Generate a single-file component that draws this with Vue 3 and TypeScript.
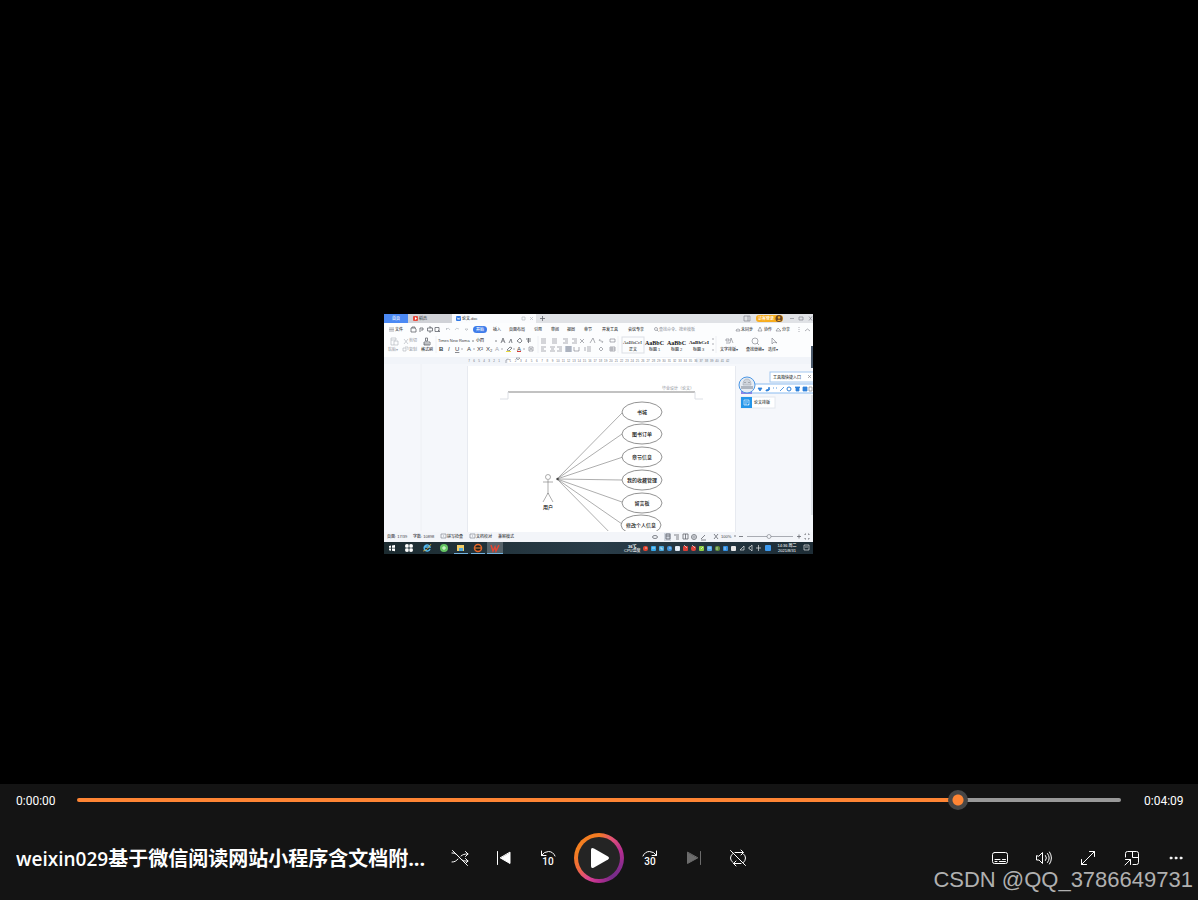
<script setup lang="ts">
import { computed, ref } from 'vue'

interface Label {
  x: number
  y: number
  text: string
  kind?: string
}

const position = ref(851)
const fill = computed(() => ({ '--fill': `${position.value / 10}%` }))

const menuLabels: Label[] = [
  { x: 395, y: 331, text: '文件' },
  { x: 493, y: 331, text: '插入' },
  { x: 509, y: 331, text: '页面布局' },
  { x: 534, y: 331, text: '引用' },
  { x: 551, y: 331, text: '审阅' },
  { x: 567, y: 331, text: '视图' },
  { x: 584, y: 331, text: '章节' },
  { x: 602, y: 331, text: '开发工具' },
  { x: 628, y: 331, text: '会议专享' },
  { x: 659, y: 331, text: '查找命令、搜索模板', kind: 'faint' },
  { x: 741, y: 331, text: '未同步' },
  { x: 764, y: 331, text: '协作' },
  { x: 782, y: 331, text: '分享' },
]

const ribbonLabels: Label[] = [
  { x: 388, y: 351, text: '粘贴▾', kind: 'faint' },
  { x: 409, y: 342, text: '剪切', kind: 'faint' },
  { x: 409, y: 351, text: '复制', kind: 'faint' },
  { x: 421, y: 351, text: '格式刷' },
  { x: 476, y: 342, text: '小四' },
  { x: 629, y: 351, text: '正文' },
  { x: 649, y: 351, text: '标题 1' },
  { x: 671, y: 351, text: '标题 2' },
  { x: 693, y: 351, text: '标题 3' },
  { x: 720, y: 351, text: '文字排版▾' },
  { x: 746, y: 351, text: '查找替换▾' },
  { x: 768, y: 351, text: '选择▾' },
]

const statusLabels: Label[] = [
  { x: 387, y: 538, text: '页面: 17/39' },
  { x: 413, y: 538, text: '字数: 10898' },
  { x: 447, y: 538, text: '拼写检查' },
  { x: 476, y: 538, text: '文档校对' },
  { x: 498, y: 538, text: '兼容模式' },
  { x: 721, y: 538, text: '100%' },
]

const useCases = [
  { cx: 642, cy: 412, text: '书城' },
  { cx: 642, cy: 434, text: '图书订单' },
  { cx: 642, cy: 457, text: '章节信息' },
  { cx: 642, cy: 480, text: '我的收藏管理' },
  { cx: 642, cy: 503, text: '留言板' },
  { cx: 641, cy: 525, text: '修改个人信息' },
]

const rulerLeft = [7, 6, 5, 4, 3, 2, 1]
const rulerRight = Array.from({ length: 42 }, (_, i) => i + 1)

const trayColors = ['#e2442f', '#35a7e8', '#4aa9dc', '#3f93db', '#dfe9f4', '#d93e35', '#dc4239', '#8fd044', '#56a9ea', '#63913b', '#3290e4', '#e7e7e7']
</script>

<template>
  <main class="player">
    <section class="stage">
      <svg class="frame" viewBox="384 313 430 242" role="img" aria-label="论文.doc">
        <defs>
          <clipPath id="page-clip"><rect x="468" y="366" width="267" height="165" /></clipPath>
          <clipPath id="frame-clip"><rect x="384" y="314" width="429" height="240" /></clipPath>
          <linearGradient id="task" x1="0" x2="1"><stop offset="0" stop-color="#1c2b30" /><stop offset=".5" stop-color="#293c48" /><stop offset="1" stop-color="#1e2d36" /></linearGradient>
        </defs>
        <g clip-path="url(#frame-clip)">
          <rect x="384" y="314" width="429" height="240" fill="#f5f7fb" />

          <!-- document tabs -->
          <rect x="384" y="314" width="429" height="9" fill="#e0e2e6" />
          <rect x="384" y="314" width="24" height="9" fill="#4b89f4" />
          <rect x="408" y="314" width="44" height="9" fill="#d0d2d7" />
          <rect x="452" y="314" width="84" height="10" fill="#fafbfd" />
          <text x="392" y="320" class="tiny white">首页</text>
          <rect x="413" y="316" width="5" height="5" rx="1" fill="#e84a3c" />
          <path d="M415 317v3l2-1.500z" fill="#fff" />
          <text x="419" y="320" class="tiny">稻壳</text>
          <rect x="456" y="316" width="5" height="5" rx="1" fill="#2f78e4" />
          <path d="M457 317.500l1 2 .6-1.500.6 1.500 1-2" class="thin white-line" />
          <text x="462" y="320" class="tiny">论文.doc</text>
          <path d="M522 317h3v3h-3zM530 317l3 3m0-3l-3 3" class="thin soft" />
          <path d="M540 318.500h5M542.500 316v5" class="line" />
          <path d="M744 316h6v5h-6zM748 316v5M790 318.500h4M799 317h4v3h-4zM809 316.500l3 4m0-4l-3 4" class="thin" />
          <rect x="756" y="315" width="27" height="7" rx="3" fill="#f8ad1e" />
          <text x="758" y="320" class="tiny white">访客登录</text>
          <circle cx="779" cy="318.500" r="3.500" fill="#6d4826" />
          <circle cx="779" cy="317.500" r="1.200" fill="#f8ad1e" />
          <path d="M777 321q2-3 4 0z" fill="#f8ad1e" />

          <!-- menu and ribbon -->
          <rect x="384" y="323" width="429" height="34" fill="#fcfdfe" />
          <path d="M389 328h5M389 329.500h5M389 331h5" class="thin" />
          <path d="M411 328h4l1 1v3h-5zM412 328v-1h3v1M420 332v-4h3v2h-2M427.500 328h5v3h-5zM429 327h2v1M429 332h2M435 327.500h4v4h-4zM438 330l2 2" class="line" />
          <path d="M446 329q3-2 4 1M446 329l1-1m-1 1l1 1M459 329q-3-2-4 1M465 329h3l-1.500 1.500z" class="thin soft" />
          <rect x="473" y="326" width="14" height="7" rx="3.500" fill="#3d7bea" />
          <text x="476" y="331" class="tiny white">开始</text>
          <circle cx="656" cy="329" r="1.500" class="thin" /><path d="M657 330l1.500 1.500" class="thin" />
          <path d="M736 331a2 2 0 1 1 4 0zM758 331l2-4 2 4zM776 331l2-3 3 3zM799 327v1m0 1v1m0 1v1M805 331l2.500-2 2.500 2" class="thin" />
          <text v-for="l in menuLabels" :key="l.text" :x="l.x" :y="l.y" class="tiny" :class="l.kind">{{ l.text }}</text>

          <path d="M391 338h5v2h-5zM391 340v5h3M394 341h4v4h-4zM404 339l4 5m0-5l-4 5M403 348h3v3h-3zM405 347h3v3" class="thin soft" />
          <path d="M425.500 338h2v3h-2zM424 342h6v3h-6zM424 344h5" class="line" />
          <text x="438" y="342" class="tiny">Times New Roma</text>
          <path d="M472 341h2M495 341h2M501 343l2-5 2 5M502 341h2M509 343l2-4 1 4M517 341l3-3 2 3-2 2zM526 339h5M528.500 338v5M527 341h4" class="line" />
          <text x="439" y="351" class="format bold">B</text>
          <text x="448" y="351" class="format italic">I</text>
          <text x="455" y="351" class="format under">U</text>
          <text x="467" y="351" class="format">A</text>
          <text x="477" y="351" class="format">X²</text>
          <text x="486" y="351" class="format">X₂</text>
          <text x="495" y="351" class="format faint">A</text>
          <text x="517" y="351" class="format">A</text>
          <path d="M461 349h2M473 349h2M501 349h2M513 349h2M523 349h2" class="thin" />
          <path d="M507 350l3-3 2 1-3 3z" class="line" />
          <path d="M506 351.500h5" stroke="#eadb3b" /><path d="M517 351.500h4" stroke="#d83b36" />
          <path d="M529 347h4v4h-4zM530 350l1-2 1 2" class="thin" />
          <path d="M541 339h5m-5 2h5m-5 2h5M552 339h5m-5 2h5m-5 2h5M563 339h5m-3 2h3m-5 2h5M572 339h5m-3 2h3m-5 2h5M580 339l4 4m0-4l-4 4M590 343l3-5 2 5M600 339q-2 2 1 2t1 2M610 339h5v3h-5z" class="thin" />
          <rect x="565" y="346" width="7" height="6" fill="#c3cbd8" />
          <path d="M541 347h5m-5 2h3m-3 2h5M550 347h5m-4 2h3m-4 2h5M557 347h5m-3 2h3m-5 2h5M566 347h5m-5 2h5m-5 2h5M574 347v4h5v-4M585 347v4M587 347h4m-4 2h4m-4 2h4M599 349l2-2 2 2-2 2zM610 347h5v4h-5zM612 347v4M610 349h5" class="thin" />
          <path d="M436 336v17M538 336v17M618 336v17M716 336v17" class="hair faded" />
          <rect x="622" y="337" width="22" height="16" class="hair" />
          <text x="623" y="344" class="sample">AaBbCcI</text>
          <text x="645" y="345" class="sample large">AaBbC</text>
          <text x="667" y="345" class="sample large">AaBbC</text>
          <text x="689" y="344" class="sample semi">AaBbCcI</text>
          <path d="M712 339h2M712 344h2M712 350h2M726 339h3v2h-3zM730 343l1-5 2 5M726 343h4" class="thin" />
          <circle cx="755" cy="341" r="3" class="thin" /><path d="M757 343l2 2M772 338v6l2-2 3 1z" class="thin" />
          <text v-for="l in ribbonLabels" :key="l.text" :x="l.x" :y="l.y" class="tiny" :class="l.kind">{{ l.text }}</text>

          <!-- ruler -->
          <rect x="384" y="357" width="429" height="7" fill="#f1f4f9" />
          <rect x="508" y="358" width="188" height="5" fill="#fff" />
          <text v-for="(n, i) in rulerLeft" :key="`l${n}`" :x="469 + i * 5" y="362" class="ruler">{{ n }}</text>
          <text v-for="n in rulerRight" :key="`r${n}`" :x="505 + n * 5.3" y="362" class="ruler">{{ n }}</text>
          <path d="M506 363v-3l2-1 2 1M516 358h4l-2 2z" class="thin" />

          <!-- page with the use case drawing -->
          <path d="M421 364v167" class="hair faded" />
          <rect x="467" y="366" width="269" height="166" fill="#e7eaf0" />
          <rect x="468" y="366" width="267" height="166" fill="#fff" />
          <text x="662" y="390" class="tiny faint">毕业设计（论文）</text>
          <path d="M508 392H695" stroke="#858585" />
          <path d="M508 392v7h-8M695 392v7h8" class="hair" />
          <g clip-path="url(#page-clip)">
            <path d="M557 479L623 412M557 479L622 434M557 479L623 457M557 479L622 480M557 479L622 502M557 479L622 524M557 479L624 547" class="edge" />
            <circle cx="557.500" cy="479" r="1.200" fill="#444" />
            <g v-for="u in useCases" :key="u.text">
              <ellipse :cx="u.cx" :cy="u.cy" rx="20" ry="10" class="bubble" />
              <text :x="u.cx" :y="u.cy + 2" class="case">{{ u.text }}</text>
            </g>
            <circle cx="548" cy="477" r="2.500" class="edge" />
            <path d="M548 480v14M543 482h10M548 493l-5 9M548 493l5 9" class="edge" />
            <text x="548" y="509" class="case">用户</text>
          </g>

          <!-- floating tool box -->
          <rect x="770" y="372" width="44" height="10" fill="#fff" stroke="#a3c8ef" />
          <text x="773" y="379" class="tiny">工具箱快捷入口</text>
          <path d="M808 375l3 3m0-3l-3 3" class="thin" />
          <rect x="751" y="384" width="65" height="9" fill="#fff" stroke="#8bbcf0" />
          <rect x="741" y="391" width="11" height="3" fill="#8e83e6" />
          <circle cx="747" cy="385" r="8" fill="#e6ecf3" stroke="#4a96e5" />
          <path d="M743 385q0-6 4-6t4 6z" fill="#cfd4db" stroke="#9da5b0" stroke-width=".6" />
          <path d="M741 386h12v3h-12z" fill="#aeb5bf" />
          <path d="M745 382v1M749 382v1" class="line" />
          <path d="M758 388h4l-2 3zM766 390q3 0 3-3q2 4-3 4zM773 388h1m2 0h1M780 391l4-4M795 387l1 1v3h3v-3l1-1zM803 387h4v4h-4z" fill="#2f82db" stroke="#2f82db" stroke-width=".8" />
          <circle cx="789" cy="389" r="2" fill="none" stroke="#2f82db" />
          <path d="M809 387h3v4h-3z" class="thin" />
          <rect x="741" y="397" width="34" height="11" fill="#fff" stroke="#e4e8ee" />
          <rect x="741" y="397" width="11" height="11" fill="#2496ea" />
          <path d="M744 400h5v5h-5zM745 402h3M745 404h2M748 404l1 1" class="thin white-line" />
          <text x="754" y="404" class="tiny">论文排版</text>
          <rect x="811" y="346" width="2" height="22" fill="#4b5a6c" />
          <rect x="811" y="395" width="2" height="120" fill="#dfe3e9" />

          <!-- status bar -->
          <rect x="384" y="532" width="429" height="10" fill="#f3f5f9" />
          <text v-for="l in statusLabels" :key="l.text" :x="l.x" :y="l.y" class="tiny">{{ l.text }}</text>
          <path d="M441 534h5v4h-5zM443 536h1M470 534h5v4h-5zM472 536h1" class="thin" />
          <ellipse cx="655" cy="537" rx="2.500" ry="1.500" class="line" />
          <rect x="664" y="533" width="7" height="8" fill="#d0d6df" />
          <path d="M666 534h4v5h-4zM666 536h4M674 535h5m-3 2h3m-3 2h3M683 534h5v5h-5zM685.500 534v5M701 539l4-4M701 540h5M714 534l4 5m0-5l-4 5M739 536.500h4M797 536.500h4M799 534.500v4M806 534h-1v1m3-1h1v1m-4 3v1h1m2 0h1v-1M734 536h2" class="line" />
          <circle cx="694" cy="537" r="2.500" class="line" /><path d="M692 537h4M694 535v4" class="thin" />
          <path d="M747 536.500h46" class="thin" /><circle cx="769" cy="536.500" r="2" class="thin knob" />

          <!-- task bar -->
          <rect x="384" y="542" width="429" height="12" fill="url(#task)" />
          <path d="M389 546l2-.4v2.200h-2zM392 545.500l3-.5v2.800h-3zM389 548.500h2v2.200l-2-.4zM392 548.500h3v2.800l-3-.5z" fill="#fff" />
          <g fill="#fff"><circle cx="407" cy="546" r="2" /><circle cx="411" cy="546" r="2" /><circle cx="407" cy="550" r="2" /><circle cx="411" cy="550" r="2" /></g>
          <path d="M406 548h6M409 545v6" stroke="#526168" stroke-width=".6" />
          <path d="M430 549a3 3 0 1 1 0-2h-5" fill="none" stroke="#51b8f0" stroke-width="1.500" /><path d="M423 551q4 0 8-7" fill="none" stroke="#e5bd40" stroke-width=".7" />
          <circle cx="444" cy="548" r="4" fill="#65c563" /><path d="M442 548h4M444 546v4" stroke="#e4ffe2" />
          <rect x="457" y="545" width="7" height="6" fill="#f2cd66" /><rect x="459" y="548" width="4" height="3" fill="#4faae0" />
          <circle cx="478" cy="548" r="3.500" fill="#201d1a" stroke="#e5672b" stroke-width="1.500" /><path d="M475 548h6" stroke="#ed8a36" />
          <rect x="487" y="542" width="16" height="12" fill="#56636a" />
          <path d="M491 545l2 6 2-4 1 4 3-6" fill="none" stroke="#e24532" stroke-width="1.500" />
          <path d="M454 553.500h14M471 553.500h14M487 553.500h16" stroke="#73b2de" />
          <text x="628" y="548" class="tiny white bold">36℃</text><text x="624" y="552" class="tiny white">CPU温度</text>
          <rect v-for="(c, i) in trayColors" :key="i" :x="643 + i * 8" y="546" width="5" height="5" :rx="i % 3 === 0 ? 2 : 1" :fill="c" />
          <path d="M645 548h2M652 548h3M661 547v2h2M669 548h2M676 547l2 3 1-3M684 545l3 3M692 545l3 3M701 549l2-2M708 548h3M717 547v3M725 547v3" class="thin white-line" />
          <path d="M740 550l4-4v4zM749 547h1l2-2v6l-2-2h-1zM756 548h5M758.500 545v6M804 545h5v5h-5zM805 547h3" class="thin white-line" />
          <rect x="765" y="545" width="6" height="6" rx="1" fill="#3c99ee" />
          <text x="787" y="547" class="tiny white mid">14:36 周二</text>
          <text x="787" y="552" class="tiny white mid">2021/8/31</text>
        </g>
      </svg>
    </section>

    <section class="controls" aria-label="播放控件">
      <div class="timeline">
        <span class="time">0:00:00</span>
        <input v-model.number="position" class="seek" :style="fill" type="range" min="0" max="1000" aria-label="进度" />
        <span class="time">0:04:09</span>
      </div>

      <div class="row">
        <h1 class="title"><span class="latin">weixin029</span>基于微信阅读网站小程序含文档附...</h1>

        <div class="group">
          <button type="button" aria-label="随机播放">
            <svg class="icon" viewBox="0 0 20 20"><path d="M2 5h1c5 0 7 8 12 8h3M2 14c3 0 4-1 6-3M11 8c2-1.500 3-2 7-2M15.500 3.500L18 6l-2.500 2.500M15.500 10.500L18 13l-2.500 2.500M2.500 2.500l15 15" /></svg>
          </button>
          <button type="button" aria-label="上一个">
            <svg class="icon" viewBox="0 0 20 20"><path d="M3.500 3.500v13" /><path class="solid" d="M16 4.500v11L6.500 10z" /></svg>
          </button>
          <button type="button" aria-label="后退 10 秒">
            <svg class="icon" viewBox="0 0 20 20"><path d="M3.500 3v4.500H8M3.500 7.500Q6 3.500 10.500 3.500T17 8" /><text x="10" y="17">10</text></svg>
          </button>
          <button type="button" class="play" aria-label="播放">
            <svg viewBox="0 0 50 50"><path d="M17 17v16q0 3 3 1.500l14-8q2-1.500 0-3l-14-8q-3-1.500-3 1.500z" /></svg>
          </button>
          <button type="button" aria-label="前进 30 秒">
            <svg class="icon" viewBox="0 0 20 20"><path d="M16.500 3v4.500H12M16.500 7.500Q14 3.500 9.500 3.500T3 8" /><text x="10" y="17">30</text></svg>
          </button>
          <button type="button" disabled aria-label="下一个">
            <svg class="icon" viewBox="0 0 20 20"><path d="M16.500 3.500v13" /><path class="solid" d="M3.500 4.500v11L13.500 10z" /></svg>
          </button>
          <button type="button" aria-label="重复">
            <svg class="icon" viewBox="0 0 20 20"><path d="M7 4.500h8M13 2l2.500 2.500L13 7M5 5.500Q2.500 7 2.500 10T5 14.500M15.500 6q2 1.500 2 4t-2 4.500M13 15.500H5.500M8 13l-2.500 2.500L8 18M2.500 2.500l15 15" /></svg>
          </button>
        </div>

        <div class="group end">
          <button type="button" aria-label="字幕">
            <svg class="icon" viewBox="0 0 20 20"><rect x="2.500" y="4.500" width="15" height="11" rx="2" /><path d="M5 11.500h5M12.500 11.500h3M5 13.500h2M9.500 13.500h6" /></svg>
          </button>
          <button type="button" aria-label="音量">
            <svg class="icon" viewBox="0 0 20 20"><path d="M2.500 8v4h2.500l3.500 3.500v-11L5 8zM11.500 7.500q2 2.500 0 5M13.500 5.500q3.500 4.500 0 9M15.500 4q4 6 0 12" /></svg>
          </button>
          <button type="button" aria-label="全屏">
            <svg class="icon" viewBox="0 0 20 20"><path d="M3.500 16.500l13-13M11.500 3.500h5v5M3.500 11.500v5h5" /></svg>
          </button>
          <button type="button" aria-label="迷你播放器">
            <svg class="icon" viewBox="0 0 20 20"><path d="M3.500 9V5.500q0-2 2-2h9q2 0 2 2v9q0 2-2 2H11M10.500 3.500v6h6M3.500 11.500h5v5M8.500 11.500l-5.500 5.500" /></svg>
          </button>
          <button type="button" aria-label="更多选项">
            <svg class="icon" viewBox="0 0 20 20"><g class="solid"><circle cx="5" cy="10" r="1" /><circle cx="10" cy="10" r="1" /><circle cx="15" cy="10" r="1" /></g></svg>
          </button>
        </div>
      </div>
      <p class="watermark">CSDN @QQ_3786649731</p>
    </section>
  </main>
</template>

<style>
html,
body {
  background: #000;
}
</style>

<style scoped>
.player {
  display: flex;
  flex-direction: column;
  min-height: 100vh;
  background: #000;
  color: #fff;
  font-family: "Open Sans", "Noto Sans CJK SC", sans-serif;
}
.stage {
  flex: 1;
  display: flex;
  align-items: center;
  justify-content: center;
  padding-top: 84px;
}
.frame {
  display: block;
  width: 430px;
  max-width: 100%;
}
.frame text {
  fill: #3c3f45;
  font-family: "Liberation Sans", "Noto Sans CJK SC", sans-serif;
}
.frame .tiny { font-size: 4px; font-weight: 500; }
.frame .white { fill: #fff; }
.frame .faint { fill: #a3a7ae; }
.frame .bold { font-weight: 700; }
.frame .italic { font-style: italic; }
.frame .under { text-decoration: underline; }
.frame .format { font-size: 6px; }
.frame .ruler { font-size: 3px; fill: #70757f; text-anchor: middle; }
.frame .mid { text-anchor: middle; }
.frame .sample { font-family: "Liberation Serif", serif; font-size: 5px; fill: #111; }
.frame .large { font-size: 6px; font-weight: 700; }
.frame .semi { font-weight: 700; }
.frame .case { font-size: 5px; font-weight: 500; fill: #111; text-anchor: middle; }
.line { fill: none; stroke: #62666d; stroke-width: 0.8; }
.thin { fill: none; stroke: #777b83; stroke-width: 0.6; }
.knob { fill: #f3f5f9; }
.soft { stroke: #adb1b8; }
.hair { stroke: #dcdfe5; stroke-width: 1; fill: none; }
.faded { stroke: #eef0f4; }
.white-line { stroke: #fff; }
.edge { fill: none; stroke: #777; stroke-width: 0.6; }
.bubble { fill: #fff; stroke: #777; stroke-width: 0.8; }

.controls {
  position: relative;
  background: #141414;
}
.timeline {
  display: flex;
  align-items: center;
  gap: 23px;
  height: 32px;
  padding: 0 16px;
}
.time {
  width: 38px;
  padding-top: 2px;
  font-family: Roboto, sans-serif;
  font-size: 12px;
  line-height: 16px;
  white-space: nowrap;
}
.seek {
  flex: 1;
  min-width: 0;
  height: 20px;
  margin: 0;
  appearance: none;
  background: transparent;
}
.seek::-webkit-slider-runnable-track {
  height: 4px;
  border-radius: 2px;
  background: linear-gradient(to right, #ff8534 var(--fill), #999 var(--fill));
}
.seek::-webkit-slider-thumb {
  appearance: none;
  width: 20px;
  height: 20px;
  margin-top: -8px;
  border-radius: 50%;
  background: radial-gradient(circle, #ff8534 5px, #464646 6px);
}
.row {
  display: grid;
  grid-template-columns: minmax(0, 1fr) auto minmax(0, 1fr);
  align-items: center;
  height: 84px;
}
.title {
  margin: 0 8px 0 16px;
  padding-top: 2px;
  overflow: hidden;
  font-size: 20px;
  font-weight: 700;
  line-height: 28px;
  text-overflow: ellipsis;
  white-space: nowrap;
}
.latin {
  font-size: 19px;
  font-weight: 600;
}
.group {
  display: flex;
  align-items: center;
}
.end {
  justify-content: flex-end;
}
button {
  display: flex;
  align-items: center;
  justify-content: center;
  width: 44px;
  height: 44px;
  padding: 0;
  border: 0;
  background: none;
  color: #fff;
}
button:disabled {
  color: #6c6c6c;
}
.icon {
  width: 20px;
  height: 20px;
  fill: none;
  stroke: currentColor;
  stroke-width: 1;
  stroke-linecap: round;
  stroke-linejoin: round;
}
.icon .solid {
  fill: currentColor;
}
.icon text {
  fill: currentColor;
  stroke: none;
  font-family: Roboto, sans-serif;
  font-size: 10px;
  font-weight: 500;
  text-anchor: middle;
}
.play {
  width: 50px;
  height: 50px;
  margin: 0 4px;
  border: 4px solid transparent;
  border-radius: 50%;
  background:
    linear-gradient(#242424, #242424) padding-box,
    conic-gradient(#f37b22, #e0507a 10%, #b52d90 20%, #8b2c8e 30%, #752c88 40%, #b32c8f 50%, #dc4590 58%, #f06c3a 68%, #f58020 80%, #f37b22) border-box;
}
.play svg {
  flex: none;
  width: 50px;
  height: 50px;
  fill: #fff;
}
.watermark {
  position: absolute;
  right: 5px;
  bottom: 7px;
  margin: 0;
  color: #b0b0b0;
  font-family: "Liberation Sans", sans-serif;
  font-size: 22px;
  line-height: 26px;
  pointer-events: none;
}
</style>
